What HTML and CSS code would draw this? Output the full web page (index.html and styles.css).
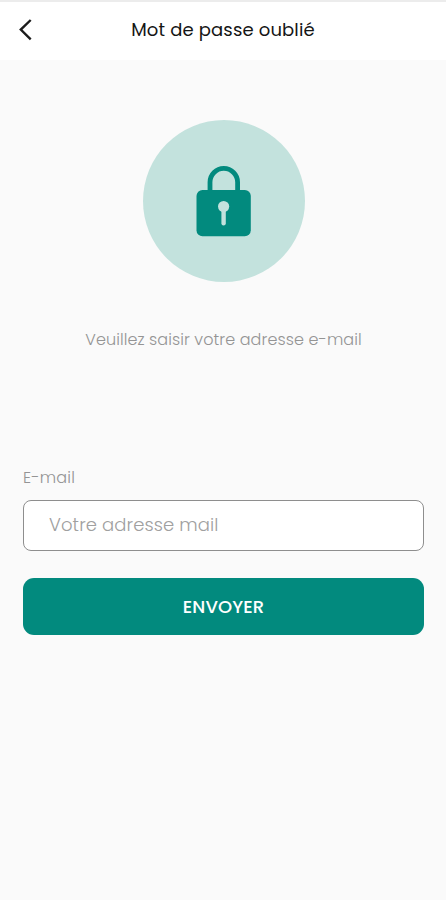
FILE: index.html
```html
<!DOCTYPE html>
<html lang="fr">
<head>
  <meta charset="UTF-8" />
  <title>Mot de passe oublié</title>
  <meta name="viewport" content="width=device-width, initial-scale=1" />
  <link rel="stylesheet" href="styles.css">
</head>

<body>
  <!-- barre du haut -->
  <header class="topbar">
    <button type="button" class="back-btn" aria-label="Retour">
      <svg viewBox="0 0 14 22">
        <path d="M12.7 1 2.8 10.6 12.7 20.4" />
      </svg>
    </button>
    <h1>Mot de passe oublié</h1>
  </header>

  <main>
    <!-- cadenas -->
    <div class="lock-badge">
      <svg viewBox="0 0 56 72">
        <path class="shackle" d="M14 28V17.2a13.8 13.8 0 0 1 27.6 0V28" />
        <rect class="body" x="0.5" y="25" width="54.3" height="46.3" rx="6" />
        <circle class="hole" cx="27.6" cy="41.5" r="5.6" />
        <path class="slot" d="M27.6 42v16.2" />
      </svg>
    </div>

    <p class="hint">Veuillez saisir votre adresse e-mail</p>

    <!-- formulaire -->
    <form class="reset-form">
      <label for="email">E-mail</label>
      <input type="email" id="email" name="email" placeholder="Votre adresse mail" autocomplete="username" />
      <button type="submit">ENVOYER</button>
    </form>
  </main>
</body>
</html>
```

FILE: styles.css
```css
:root {
  --brand: #028a7e;
  --brand-light: #c3e2dd;
  --bg: #fafafa;
  --muted: #949494;
}

* { box-sizing: border-box; margin: 0; padding: 0; }

html, body {
  width: 100%;
  min-height: 100%;
}

body {
  font-family: "Poppins", "Inter", sans-serif;
  background: var(--bg);
}

.topbar {
  display: grid;
  grid-template-columns: 52px 1fr 52px;
  align-items: center;
  height: 60px;
  padding-bottom: 2px;
  background: #fff;
  border-top: 2px solid #ececec;
}

.topbar h1 {
  padding-bottom: 2px;
  font-size: 18px;
  font-weight: 400;
  letter-spacing: 0.15px;
  color: #151515;
  text-align: center;
  white-space: nowrap;
}

.back-btn {
  display: flex;
  padding-left: 18px;
  background: none;
  border: none;
  cursor: pointer;
}

.back-btn svg {
  width: 14px;
  height: 22px;
  fill: none;
  stroke: #1c1c1c;
  stroke-width: 2.4;
}

main {
  display: flex;
  flex-direction: column;
  align-items: center;
  padding: 60px 22px 0 23px;
}

.lock-badge {
  display: flex;
  align-items: center;
  justify-content: center;
  width: 162px;
  height: 162px;
  border-radius: 50%;
  background: var(--brand-light);
}

.lock-badge svg { width: 56px; height: 72px; }
.shackle { fill: none; stroke: var(--brand); stroke-width: 4.8; }
.body { fill: var(--brand); }
.hole { fill: var(--brand-light); }
.slot { stroke: var(--brand-light); stroke-width: 4.4; stroke-linecap: round; }

.hint {
  margin-top: 46px;
  font-size: 16px;
  font-weight: 300;
  line-height: 24px;
  letter-spacing: 0.09px;
  color: var(--muted);
  white-space: nowrap;
}

.reset-form {
  display: flex;
  flex-direction: column;
  width: 100%;
  margin-top: 114px;
}

.reset-form label {
  font-size: 16px;
  font-weight: 300;
  line-height: 24px;
  letter-spacing: 0.2px;
  color: var(--muted);
}

.reset-form input {
  height: 51px;
  margin-top: 10px;
  padding: 0 25px 2px;
  border: 1px solid #8e8e8e;
  border-radius: 8px;
  background: #fff;
  color: #333;
  font-family: inherit;
  font-size: 18px;
  font-weight: 300;
  letter-spacing: 0.1px;
  outline: none;
}

.reset-form input::placeholder { color: #a0a0a0; }
.reset-form input:focus { border-color: var(--brand); }

.reset-form button {
  height: 57px;
  margin-top: 27px;
  border: none;
  border-radius: 11px;
  background: var(--brand);
  color: #fff;
  font-family: inherit;
  font-size: 18px;
  font-weight: 500;
  letter-spacing: 0.1px;
  cursor: pointer;
}
```
